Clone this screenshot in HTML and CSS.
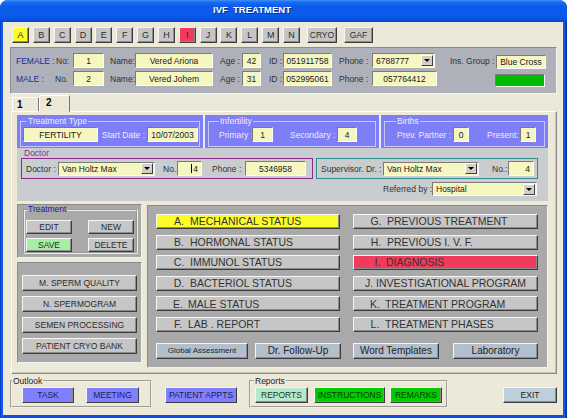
FILE: index.html
```html
<!DOCTYPE html>
<html>
<head>
<meta charset="utf-8">
<title>IVF TREATMENT</title>
<link rel="stylesheet" href="styles.css">
</head>
<body>
<div class="window">
  <div class="titlebar"><span class="title">IVF&nbsp; TREATMENT</span></div>
  <div class="client">
    <div class="letters">
      <button class="btn key hl-y">A</button>
      <button class="btn key">B</button>
      <button class="btn key">C</button>
      <button class="btn key">D</button>
      <button class="btn key">E</button>
      <button class="btn key">F</button>
      <button class="btn key">G</button>
      <button class="btn key">H</button>
      <button class="btn key hl-r">I</button>
      <button class="btn key">J</button>
      <button class="btn key">K</button>
      <button class="btn key">L</button>
      <button class="btn key">M</button>
      <button class="btn key">N</button>
      <button class="btn key cryo">CRYO</button>
      <button class="btn key gaf">GAF</button>
    </div>

    <div class="patient">
      <div class="prow">
        <span class="c-sex blue">FEMALE :</span>
        <span class="c-no">No:</span>
        <span class="fld w-no">1</span>
        <span class="lab l-name">Name:</span>
        <span class="fld w-name">Vered Ariona</span>
        <span class="lab l-age">Age :</span>
        <span class="fld w-age">42</span>
        <span class="lab l-id">ID :</span>
        <span class="fld w-id">051911758</span>
        <span class="lab l-ph">Phone :</span>
        <span class="fld combo w-ph1"><span class="ct">6788777</span><span class="cbtn"></span></span>
        <span class="lab l-ins">Ins. Group :</span>
        <span class="fld w-ins">Blue Cross</span>
      </div>
      <div class="prow">
        <span class="c-sex c-male blue">MALE :</span>
        <span class="c-no c-no2">No.</span>
        <span class="fld w-no">2</span>
        <span class="lab l-name">Name:</span>
        <span class="fld w-name">Vered Johem</span>
        <span class="lab l-age">Age :</span>
        <span class="fld w-age">31</span>
        <span class="lab l-id">ID :</span>
        <span class="fld w-id">052995061</span>
        <span class="lab l-ph">Phone :</span>
        <span class="fld w-ph2">057764412</span>
        <span class="status-ok"></span>
      </div>
    </div>

    <div class="tabs">
      <div class="tab">1</div>
      <div class="tab sel">2</div>
    </div>

    <div class="tabpage">
      <div class="info">
        <div class="bgroups">
          <div class="bg bg1">
            <fieldset class="gb">
              <legend class="gleg lg1">Treatment Type</legend>
              <div class="gin">
                <span class="fld w-fert">FERTILITY</span>
                <span class="lab l-start">Start Date :</span>
                <span class="fld w-date">10/07/2003</span>
              </div>
            </fieldset>
          </div>
          <div class="bg bg2">
            <fieldset class="gb">
              <legend class="gleg lg2">Infertility</legend>
              <div class="gin">
                <span class="lab l-prim">Primary :</span>
                <span class="fld w-prim">1</span>
                <span class="lab l-sec">Secondary :</span>
                <span class="fld w-sec">4</span>
              </div>
            </fieldset>
          </div>
          <div class="bg bg3">
            <fieldset class="gb">
              <legend class="gleg lg3">Births</legend>
              <div class="gin">
                <span class="lab l-prev">Prev. Partner :</span>
                <span class="fld w-small">0</span>
                <span class="lab l-pres">Present:</span>
                <span class="fld w-small">1</span>
              </div>
            </fieldset>
          </div>
        </div>

        <div class="docarea">
          <div class="doclab">Doctor</div>
          <div class="docrow">
            <div class="pbox">
              <span class="lab l-doc">Doctor :</span>
              <span class="fld combo w-doc"><span class="ct">Van Holtz Max</span><span class="cbtn"></span></span>
              <span class="lab l-dno">No.</span>
              <span class="fld w-dno right"><span class="caret"></span>4</span>
              <span class="lab l-dph">Phone :</span>
              <span class="fld w-dph">5346958</span>
            </div>
            <div class="tbox">
              <span class="lab l-sup">Supervisor. Dr. :</span>
              <span class="fld combo w-sup"><span class="ct">Van Holtz Max</span><span class="cbtn"></span></span>
              <span class="lab l-sno">No.:</span>
              <span class="fld w-sno right">4</span>
            </div>
          </div>
          <div class="refrow">
            <span class="lab l-ref">Referred by :</span>
            <span class="fld combo w-ref"><span class="ct">Hospital</span><span class="cbtn"></span></span>
          </div>
        </div>
      </div>

      <div class="lower">
        <div class="leftcol">
          <div class="panel ptreat">
            <fieldset class="tgb">
              <legend class="tleg">Treatment</legend>
              <div class="tgrid">
                <button class="btn tb">EDIT</button>
                <button class="btn tb">NEW</button>
                <button class="btn tb save">SAVE</button>
                <button class="btn tb">DELETE</button>
              </div>
            </fieldset>
          </div>
          <div class="panel pside">
            <button class="btn sb">M. SPERM QUALITY</button>
            <button class="btn sb">N. SPERMOGRAM</button>
            <button class="btn sb">SEMEN PROCESSING</button>
            <button class="btn sb">PATIENT CRYO BANK</button>
          </div>
        </div>

        <div class="panel rpanel">
          <div class="rgrid">
            <button class="btn rb hl-y"><span class="lt">A.</span>MECHANICAL STATUS</button>
            <button class="btn rb"><span class="lt">G.</span>PREVIOUS TREATMENT</button>
            <button class="btn rb"><span class="lt">B.</span>HORMONAL STATUS</button>
            <button class="btn rb"><span class="lt">H.</span>PREVIOUS I. V. F.</button>
            <button class="btn rb"><span class="lt">C.</span>IMMUNOL STATUS</button>
            <button class="btn rb hl-r"><span class="lt lt-i">I.</span>DIAGNOSIS</button>
            <button class="btn rb"><span class="lt">D.</span>BACTERIOL STATUS</button>
            <button class="btn rb">J. INVESTIGATIONAL PROGRAM</button>
            <button class="btn rb"><span class="lt lt-e">E.</span>MALE STATUS</button>
            <button class="btn rb"><span class="lt lt-k">K.</span>TREATMENT PROGRAM</button>
            <button class="btn rb"><span class="lt lt-e">F.</span>LAB . REPORT</button>
            <button class="btn rb"><span class="lt lt-k">L.</span>TREATMENT PHASES</button>
          </div>
          <div class="rbot">
            <button class="btn steel b-glob">Global Assessment</button>
            <button class="btn steel big b-foll">Dr. Follow-Up</button>
            <button class="btn steel big b-word">Word Templates</button>
            <button class="btn steel big b-lab">Laboratory</button>
          </div>
        </div>
      </div>
    </div>

    <div class="bottom">
      <fieldset class="ogb">
        <legend class="oleg">Outlook</legend>
        <div class="oin">
          <button class="btn peri b-task">TASK</button>
          <button class="btn peri b-meet">MEETING</button>
        </div>
      </fieldset>
      <button class="btn peri b-appt">PATIENT APPTS</button>
      <fieldset class="rgb">
        <legend class="rleg">Reports</legend>
        <div class="rin">
          <button class="btn mint b-rep">REPORTS</button>
          <button class="btn green b-ins">INSTRUCTIONS</button>
          <button class="btn green b-rem">REMARKS</button>
        </div>
      </fieldset>
      <button class="btn exit b-exit">EXIT</button>
    </div>
  </div>
</div>
</body>
</html>
```

FILE: styles.css
```css
* { box-sizing: border-box; }
html, body { margin: 0; padding: 0; }
body {
  width: 567px; height: 418px; overflow: hidden; background: #fff;
  font-family: "Liberation Sans", Arial, sans-serif;
  font-size: 8.5px; color: #303030;
}
.window {
  width: 567px; height: 418px; display: flex; flex-direction: column;
  background: linear-gradient(to right, #0030B0 0, #0A4FE0 1px, #1A66F0 2px, #0A4FE0 3px, #0A4FE0 563px, #1A66F0 564px, #0A4FE0 565px, #0030B0 566px);
  border-radius: 8px 8px 0 0; overflow: hidden;
}
.titlebar {
  height: 22px; flex: none; padding: 4px 0 0 213px;
  background: linear-gradient(to bottom, #3F8FFA 0%, #1A6CF2 10%, #0A5BEA 30%, #0A5CEB 65%, #0752E2 88%, #0445CC 100%);
  color: #fff; font: bold 9.5px/12px "Liberation Sans", Arial, sans-serif;
  text-shadow: 1px 1px 0 #0A2A8A;
}
.client {
  flex: 1; margin: 0 4px 3px 3px; background: #ECE9D8;
  display: flex; flex-direction: column;
}
.btn {
  font: inherit; margin: 0; padding: 0; background: #C6C6C6; color: #2b2b2b;
  border: 1px solid; border-color: #f6f6f6 #3c3c3c #3c3c3c #f6f6f6;
  box-shadow: inset -1px -1px 0 #8c8c8c;
  display: flex; align-items: center; justify-content: center;
  white-space: nowrap; line-height: 1; flex: none;
}
.hl-y { background: #FCFC2A; }
.hl-r { background: #F23A5C; }

/* letters */
.letters { display: flex; gap: 3.85px; margin: 5px 0 0 9px; height: 16px; }
.key { width: 17px; height: 16px; font-size: 9px; }
.key.cryo { width: 30px; margin-left: 3.15px; font-size: 8.5px; }
.key.gaf { width: 29px; margin-left: 3.15px; font-size: 8.5px; }

/* patient panel */
.patient {
  margin: 4px 0 0 7px; width: 547px; height: 47px; flex: none;
  background: #AEB0BA; border: 1px solid; border-color: #8a8c96 #f4f4f4 #f4f4f4 #8a8c96;
  padding: 5px 0 0 5px; display: flex; flex-direction: column; gap: 3px;
}
.prow { display: flex; align-items: center; height: 15px; }
.blue { color: #1F2A9A; }
.lab { white-space: nowrap; flex: none; }
.c-sex { width: 40px; flex: none; white-space: nowrap; }
.c-no { width: 17px; flex: none; white-space: nowrap; }
.c-male { width: 39px; }
.c-no2 { width: 18px; }
.fld {
  height: 15px; flex: none; background: #F6F6C0; color: #202020;
  border: 1px solid; border-color: #7b7b7b #fbfbfb #fbfbfb #7b7b7b;
  display: flex; align-items: center; justify-content: center;
  font-size: 8.5px; white-space: nowrap; overflow: hidden;
}
.fld.right { justify-content: flex-end; padding-right: 3px; }
.caret { width: 1px; height: 9px; background: #000; margin-right: 1px; }
.w-no { width: 31px; }
.l-name { margin-left: 6px; width: 25px; }
.w-name { width: 78px; }
.l-age { margin-left: 7px; width: 22px; }
.w-age { width: 19px; }
.l-id { margin-left: 8px; width: 14px; }
.w-id { width: 49px; }
.l-ph { margin-left: 7px; width: 33px; }
.w-ph1 { width: 63px; }
.w-ph2 { width: 65px; }
.l-ins { margin-left: 15px; width: 46px; }
.w-ins { width: 50px; height: 14px; margin-top: 3px; }
.status-ok {
  width: 50px; height: 13px; margin-left: 58px; margin-top: 3px; background: #00BB00;
  border: 1px solid; border-color: #7b7b7b #fbfbfb #fbfbfb #7b7b7b;
}
.combo { justify-content: space-between; padding-left: 3px; }
.cbtn {
  width: 12px; height: 11px; margin-right: 1px; flex: none; background: #D4D0C8;
  border: 1px solid; border-color: #fff #404040 #404040 #fff;
  display: flex; align-items: center; justify-content: center;
}
.cbtn::after {
  content: ""; border-left: 3px solid transparent; border-right: 3px solid transparent;
  border-top: 3px solid #000;
}

/* tabs */
.tabs { display: flex; align-items: flex-end; margin: 1px 0 0 9px; height: 16px; position: relative; z-index: 1; flex: none; }
.tab {
  width: 27px; height: 14px; background: #ECE9D8; padding: 1px 0 0 4px;
  border: 1px solid; border-color: #fff #7a7a7a transparent #fff; border-bottom: 0;
  font: bold 10px/12px "Liberation Sans", Arial, sans-serif; color: #000;
}
.tab.sel { width: 31px; height: 17px; margin-bottom: -1px; padding: 1px 0 0 6px; }

.tabpage {
  margin-left: 8px; width: 546px; height: 263px; flex: none;
  border: 1px solid; border-color: #fff #8a8a8a #8a8a8a #fff;
  box-shadow: inset -1px -1px 0 #c8c6b8;
  padding: 3px 0 0 5px; background: #ECE9D8;
}
.info { width: 531px; height: 86px; background: #CACDD0; }
.bgroups { display: flex; gap: 2px; height: 33px; background: #ECECF6; }
.bg { background: #7E7EF6; height: 33px; padding: 1px 3px 0; }
.bg1 { width: 186px; }
.bg2 { width: 174px; }
.bg3 { width: 167px; }
.gb {
  margin: 0; padding: 0; height: 31px; min-width: 0;
  border: 1px solid #C6C6FF;
}
.gleg { padding: 0 1px; font-size: 8.5px; line-height: 10px; color: #EEEEFF; }
.lg1 { margin-left: 6px; }
.lg2 { margin-left: 10px; }
.lg3 { margin-left: 11px; }
.gin { display: flex; align-items: center; height: 15px; margin-top: 1px; color: #ECECF8; }
.w-fert { width: 75px; margin-left: 2px; }
.l-start { margin-left: 4px; width: 45px; }
.w-date { width: 51px; }
.l-prim { margin-left: 10px; width: 33px; }
.w-prim { width: 21px; }
.l-sec { margin-left: 17px; width: 47px; }
.w-sec { width: 20px; }
.l-prev { margin-left: 12px; width: 56px; }
.w-small { width: 16px; }
.l-pres { margin-left: 18px; width: 33px; }

.docarea { padding: 1px 10px 0 4px; height: 53px; }
.doclab { color: #8E2B8E; margin-left: 3px; height: 9px; line-height: 9px; }
.docrow { display: flex; height: 21px; }
.pbox { width: 292px; border: 1px solid #8C2A8C; display: flex; align-items: center; padding-left: 4px; }
.tbox { width: 222px; margin-left: 3px; border: 1px solid #2E8E8E; display: flex; align-items: center; padding-left: 4px; }
.l-doc { width: 32px; }
.w-doc { width: 97px; height: 14px; }
.l-dno { margin-left: 8px; width: 14px; }
.w-dno { width: 25px; }
.l-dph { margin-left: 10px; width: 33px; }
.w-dph { width: 61px; }
.l-sup { width: 62px; }
.w-sup { width: 96px; height: 14px; }
.l-sno { margin-left: 13px; width: 16px; }
.w-sno { width: 26px; }
.refrow { display: flex; justify-content: flex-end; align-items: center; margin-top: 3px; padding-right: 1px; }
.l-ref { width: 49px; }
.w-ref { width: 105px; height: 14px; }

/* lower section */
.lower { display: flex; margin-top: 3px; height: 164px; }
.leftcol { width: 125px; display: flex; flex-direction: column; gap: 4px; flex: none; }
.panel { background: #A9A9A9; border: 1px solid; border-color: #8a8a8a #f2f2f2 #f2f2f2 #8a8a8a; flex: none; }
.ptreat { height: 54px; padding-left: 5px; }
.tgb { margin: 0; padding: 0; width: 115px; height: 49px; min-width: 0; border: 2px groove #ECECEC; }
.tleg { margin-left: 2px; padding: 0 1px; color: #1A1A9E; line-height: 9px; }
.tgrid { display: grid; grid-template-columns: 46px 46px; column-gap: 16px; row-gap: 4px; padding: 6px 0 0 1px; }
.tb { height: 14px; width: 46px; }
.save { background: #A4EFA4; }
.pside { height: 101px; padding: 12px 0 0 4px; display: flex; flex-direction: column; gap: 5px; }
.sb { width: 115px; height: 16px; }

.rpanel { margin: 1px 0 0 5px; width: 401px; height: 163px; padding: 8px 0 0 8px; }
.rgrid { display: grid; grid-template-columns: 184px 185px; column-gap: 13px; row-gap: 5.6px; grid-auto-rows: 15px; }
.rb { justify-content: flex-start; padding-left: 11px; font-size: 10.5px; color: #333; }
.lt { display: inline-block; width: 22px; }
.lt-i { width: 21px; padding-left: 4px; }
.lt-e { width: 20px; }
.lt-k { width: 20px; }
.rbot { display: flex; margin-top: 11px; height: 16px; }
.steel { background: #B3BFCD; height: 16px; color: #222; }
.big { font-size: 10px; }
.b-glob { width: 92px; font-size: 8px; }
.b-foll { width: 86px; margin-left: 7px; }
.b-word { width: 86px; margin-left: 12px; }
.b-lab { width: 85px; margin-left: 14px; }

/* bottom bar */
.bottom { display: flex; align-items: flex-start; margin: 2px 0 0 7px; height: 32px; }
.ogb, .rgb { margin: 0; padding: 0; height: 32px; min-width: 0; border: 2px groove #F2F0E6; flex: none; }
.ogb { width: 142px; }
.rgb { width: 199px; margin-left: 12px; }
.oleg, .rleg { padding: 0 1px; line-height: 10px; color: #202020; }
.oleg { margin-left: 0; }
.rleg { margin-left: 3px; }
.oin, .rin { display: flex; padding-top: 1px; }
.oin { padding-left: 10px; }
.rin { padding-left: 4px; }
.peri { background: #8080FF; color: #1C1C50; height: 16px; }
.mint { background: #B6E8CA; color: #1E3A2A; height: 16px; }
.green { background: #00CC00; color: #073A07; height: 16px; }
.exit { background: #BBD0DC; color: #222; height: 16px; }
.b-task { width: 52px; }
.b-meet { width: 53px; margin-left: 12px; }
.b-appt { width: 72px; margin: 11px 0 0 13px; }
.b-rep { width: 53px; }
.b-ins { width: 71px; margin-left: 6px; }
.b-rem { width: 52px; margin-left: 5px; }
.b-exit { width: 54px; margin: 11px 0 0 55px; }
```
